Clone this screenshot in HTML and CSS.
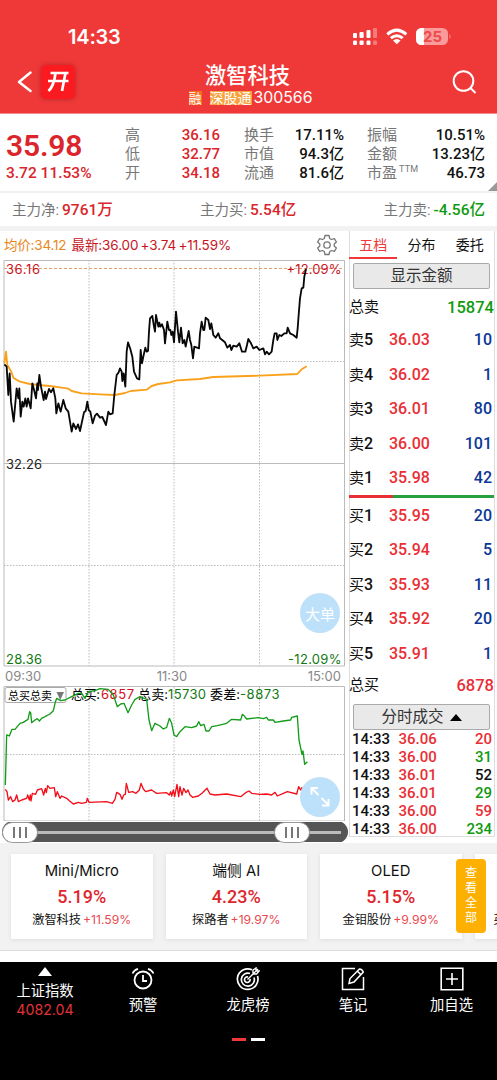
FILE: index.html
```html
<!DOCTYPE html>
<html lang="zh-CN">
<head>
<meta charset="utf-8">
<title>激智科技 300566</title>
<link rel="stylesheet" href="styles.css">
</head>
<body>
<header class="header">
  <div class="status">
    <span class="clock">14:33</span>
    <svg class="status-icons" width="100" height="20" viewBox="351 27 100 20">
      <g fill="#fff">
        <rect x="353" y="33" width="4" height="5" rx="1"/><rect x="359.500" y="32" width="4.200" height="6" rx="1"/><rect x="366.500" y="30" width="4" height="8" rx="1"/>
        <rect x="353" y="40.500" width="4" height="4.500" rx="1.200"/><rect x="359.500" y="40.500" width="4.200" height="4.500" rx="1.200"/><rect x="366.500" y="40.500" width="4" height="4.500" rx="1.200"/>
      </g>
      <g fill="#f47b7b"><rect x="373" y="28" width="4" height="10" rx="1"/><rect x="373" y="40.500" width="4" height="4.500" rx="1.200"/></g>
      <g fill="none" stroke="#fff" stroke-width="3"><path d="M387.300 34.300Q396.800 26 406.300 34.300"/><path d="M390.900 38.200Q396.800 33.200 402.700 38.200"/></g>
      <path d="M393 40.600Q396.800 37.600 400.600 40.600L396.800 44.300Z" fill="#fff"/>
      <rect x="416" y="28" width="32" height="17" rx="5.500" fill="#f99b9b"/>
      <path d="M424 28h-2.500a5.500 5.500 0 0 0-5.500 5.500v6a5.500 5.500 0 0 0 5.500 5.500h2.500z" fill="#fff"/>
      <path d="M449.500 34q2 2.500 0 5z" fill="#f99b9b"/>
      <text x="432.500" y="42" text-anchor="middle" class="battery">25</text>
    </svg>
  </div>
  <div class="nav">
    <svg class="back" width="16" height="22" viewBox="0 0 16 22"><path d="M13.500 1.500L2 11l11.500 9" fill="none" stroke="#fff" stroke-width="2.400" stroke-linecap="round" stroke-linejoin="round"/></svg>
    <div class="logo"><svg width="24" height="22" viewBox="0 0 24 22"><path d="M4.500 2H22.500M2 10H22.500M9.500 2Q8 15 2.500 20M19.500 2L16 20" fill="none" stroke="#fff" stroke-width="2.700"/></svg></div>
    <div class="title">
      <h1>激智科技</h1>
      <div class="code"><span class="tag deep">融</span><span class="tag">深股通</span><span>300566</span></div>
    </div>
    <svg class="search" width="26" height="26" viewBox="0 0 26 26" fill="none" stroke="#fff" stroke-width="2"><circle cx="11.500" cy="12" r="9.800"/><path d="M18.500 19l5 5"/></svg>
  </div>
</header>

<section class="quote">
  <div class="last"><strong>35.98</strong><span>3.72 11.53%</span></div>
  <dl class="c1"><dt>高</dt><dd>36.16</dd><dt>低</dt><dd>32.77</dd><dt>开</dt><dd>34.18</dd></dl>
  <dl class="c2"><dt>换手</dt><dd>17.11%</dd><dt>市值</dt><dd>94.3亿</dd><dt>流通</dt><dd>81.6亿</dd></dl>
  <dl class="c3"><dt>振幅</dt><dd>10.51%</dd><dt>金额</dt><dd>13.23亿</dd><dt>市盈<sup>TTM</sup></dt><dd>46.73</dd></dl>
  <i class="corner"></i>
</section>
<section class="funds">
  <div>主力净:<b>9761万</b></div><div>主力买:<b>5.54亿</b></div><div>主力卖:<b class="green">-4.56亿</b></div>
</section>

<main class="main">
  <section class="charts">
    <div class="legend">
      <span class="avg">均价:34.12</span><span class="new">最新:36.00 +3.74 +11.59%</span>
      <svg width="22" height="22" viewBox="0 0 22 22" fill="none" stroke="#777" stroke-width="1.300" stroke-linejoin="round"><path d="M9 1.500h4l.7 3 1.800 1 2.900-.9 2 3.400-2.200 2v2l2.200 2-2 3.400-2.900-.9-1.800 1-.7 3H9l-.7-3-1.800-1-2.900.9-2-3.400 2.200-2v-2l-2.200-2 2-3.400 2.900.9 1.800-1z"/><circle cx="11" cy="11" r="3.200"/></svg>
    </div>
    <div class="plot">
      <svg width="347" height="408" viewBox="0 259 347 408">
        <g fill="none" stroke="#bbb"><path d="M4 260.500H344.500V666H4zM4 463.500H344.500"/><path d="M89 260V666M174 260V666M259.500 260V666M4 361.500H344M4 565.500H344" stroke-dasharray="1.500 1.500"/></g>
        <path d="M4 268.500H344" stroke="#e2a078" stroke-dasharray="3 2"/>
        <g class="label"><text x="6" y="273.500" textLength="34" fill="#c8141e">36.16</text><text x="286.500" y="273.500" textLength="55" fill="#c8141e">+12.09%</text><text x="6" y="468.500" textLength="36" fill="#222">32.26</text><text x="6" y="663.500" textLength="36" fill="#127812">28.36</text><text x="288" y="663.500" textLength="53.500" fill="#127812">-12.09%</text></g>
        <g transform="translate(0 255) scale(.33333)" fill="none" stroke-linejoin="round">
          <path stroke="#f9a11b" stroke-width="5.500" d="M13 325L18 290 22 330 28 340 34 350 40 368 60 380 90 387 115 390 150 393 180 397 205 401 215 408 245 415 300 418 345 420 375 414 392 408 440 404 455 393 475 387 510 382 530 376 600 372 640 366 780 362 892 357 905 343 920 334"/>
          <path stroke="#080808" stroke-width="5.500" d="M13 328L20 335 25 420 29 355 33 440 41 500 50 400 55 430 58 400 62 485 67 440 71 455 76 430 80 455 84 430 92 460 97 385 103 408 108 430 112 385 114 405 118 360 123 395 131 435 135 410 138 432 147 402 153 412 160 400 166 430 169 475 175 445 182 470 190 435 197 460 205 470 215 530 220 505 228 522 234 508 240 528 252 472 257 468 262 440 266 465 271 470 278 505 285 482 291 476 300 488 307 486 318 510 325 470 330 478 338 475 343 420 350 360 356 352 360 340 365 350 367 378 371 355 376 395 380 290 384 262 391 282 397 305 402 350 411 370 418 373 422 285 426 325 430 305 436 278 440 290 444 288 447 230 450 190 457 183 462 215 465 230 468 180 475 215 478 203 481 215 486 208 492 225 495 265 502 200 507 225 511 225 514 240 518 230 522 262 528 170 534 230 538 262 543 218 548 265 553 255 557 275 566 228 570 255 574 270 579 310 583 275 597 280 600 235 605 200 610 225 613 225 617 188 625 195 630 222 634 205 640 240 647 248 655 235 660 250 675 262 682 278 690 270 694 285 700 272 710 275 718 265 726 290 736 290 741 270 745 252 753 265 760 280 770 275 778 285 790 280 795 298 800 290 807 298 815 290 820 255 824 235 830 235 832 255 838 240 844 243 853 235 860 235 863 218 870 235 880 240 890 248 893 220 896 180 900 130 905 100 910 98 913 65 918 42"/>
        </g>
      </svg>
      <button class="round big-order">大单</button>
    </div>
    <div class="times"><span>09:30</span><span>11:30</span><span>15:00</span></div>
    <div class="plot">
      <svg width="347" height="135" viewBox="0 686 347 135">
        <g fill="none" stroke="#bbb"><path d="M4 686.500H344.500V821H4z"/><path d="M89 687V821M174 687V821M259.500 687V821M4 754.500H344" stroke-dasharray="1.500 1.500"/></g>
        <rect x="5" y="687.500" width="61" height="15" rx="2" fill="#fff" stroke="#aaa"/>
        <text x="8" y="700" textLength="44" class="select">总买总卖</text><path d="M56.500 692h7.500l-3.800 8z" fill="#777"/>
        <g class="info"><text x="71" y="699" textLength="29">总买:</text><text x="101" y="699" textLength="33" fill="#d4101a">6857</text><text x="138" y="699" textLength="30">总卖:</text><text x="168" y="699" textLength="38" fill="#127812">15730</text><text x="210" y="699" textLength="30">委差:</text><text x="240" y="699" textLength="39.500" fill="#127812">-8873</text></g>
        <g transform="translate(0 640) scale(.33333)" fill="none" stroke-width="4" stroke-linejoin="round">
          <path stroke="#139c19" d="M16 435L20 285 28 288 36 268 45 268 60 250 70 247 84 238 89 215 92 218 95 248 105 240 112 236 118 243 125 235 135 230 150 222 160 212 165 190 170 175 182 182 195 180 215 170 235 160 245 160 255 175 265 155 285 152 300 146 325 148 340 165 352 200 362 192 372 190 384 218 395 195 405 178 420 170 440 178 447 240 455 272 465 250 480 258 490 267 500 262 508 235 515 250 522 285 530 290 540 275 555 260 575 263 590 258 596 245 602 257 612 253 618 273 627 273 635 260 652 257 680 250 695 238 722 240 727 223 732 227 740 237 775 233 790 236 800 232 805 240 820 240 825 247 850 243 872 240 875 232 892 228 897 300 906 343 909 333 914 373 922 365"/>
          <path stroke="#f20d18" d="M16 448L21 455 25 480 32 470 38 485 45 480 50 465 55 485 65 480 80 475 83 465 88 480 91 465 93 483 97 460 107 463 112 450 125 446 131 465 136 445 139 458 143 437 150 445 163 443 167 470 172 455 180 475 185 468 200 475 208 482 220 492 235 487 245 490 259 487 262 475 267 487 320 485 337 490 345 478 350 457 360 463 366 478 371 465 376 463 379 430 386 457 398 455 408 460 418 450 423 430 430 447 437 455 455 450 470 460 500 458 508 465 512 455 515 468 520 450 524 470 531 433 536 470 540 440 546 465 551 445 558 458 564 450 570 465 578 472 595 468 606 460 621 445 630 462 645 465 680 462 722 470 737 458 747 453 755 460 780 463 800 462 815 465 825 457 832 468 850 460 862 455 890 462 896 440 902 450 906 443 910 462 922 463"/>
        </g>
      </svg>
      <button class="round expand" aria-label="展开"><svg width="22" height="22" viewBox="0 0 22 22" fill="none" stroke="#fff" stroke-width="1.900"><path d="M2.500 8.500V2h6.500M2.500 2l7 7M12.500 12l7 7M13 19.500h6.500V13"/></svg></button>
    </div>
    <div class="slider"><i class="handle"></i><i class="track"></i><i class="handle"></i><i class="tail"></i></div>
  </section>

  <aside class="book">
    <nav class="tabs"><span class="on">五档</span><span>分布</span><span>委托</span></nav>
    <button class="bar-button">显示金额</button>
    <div class="total sell"><span>总卖</span><b class="green">15874</b></div>
    <div class="level"><span>卖<b>5</b></span><b>36.03</b><em>10</em></div>
    <div class="level"><span>卖<b>4</b></span><b>36.02</b><em>1</em></div>
    <div class="level"><span>卖<b>3</b></span><b>36.01</b><em>80</em></div>
    <div class="level"><span>卖<b>2</b></span><b>36.00</b><em>101</em></div>
    <div class="level"><span>卖<b>1</b></span><b>35.98</b><em>42</em></div>
    <div class="ratio"></div>
    <div class="level"><span>买<b>1</b></span><b>35.95</b><em>20</em></div>
    <div class="level"><span>买<b>2</b></span><b>35.94</b><em>5</em></div>
    <div class="level"><span>买<b>3</b></span><b>35.93</b><em>11</em></div>
    <div class="level"><span>买<b>4</b></span><b>35.92</b><em>20</em></div>
    <div class="level"><span>买<b>5</b></span><b>35.91</b><em>1</em></div>
    <div class="total buy"><span>总买</span><b>6878</b></div>
    <button class="bar-button">分时成交<i class="up"></i></button>
    <div class="ticks">
      <div><span>14:33</span><b>36.06</b><b>20</b></div>
      <div><span>14:33</span><b>36.00</b><b class="green">31</b></div>
      <div><span>14:33</span><b>36.01</b><b class="black">52</b></div>
      <div><span>14:33</span><b>36.01</b><b class="green">29</b></div>
      <div><span>14:33</span><b>36.00</b><b>59</b></div>
      <div><span>14:33</span><b>36.00</b><b class="green">234</b></div>
    </div>
  </aside>
</main>

<section class="cards">
  <article><h2>Mini/Micro</h2><strong>5.19%</strong><p>激智科技<span>+11.59%</span></p></article>
  <article><h2>端侧 AI</h2><strong>4.23%</strong><p>探路者<span>+19.97%</span></p></article>
  <article><h2>OLED</h2><strong>5.15%</strong><p>金钼股份<span>+9.99%</span></p></article>
  <article class="cut"><p>英</p></article>
  <button class="all">查看全部</button>
</section>

<footer class="footer">
  <div class="index"><i></i><span>上证指数</span><b>4082.04</b></div>
  <div class="item alarm"><svg width="24" height="24" viewBox="0 0 24 24" fill="none" stroke="#fff" stroke-width="1.800"><circle cx="12" cy="13" r="8.500"/><path d="M12 8v6h4M1.500 6.500Q3 3 7 1.800M22.500 6.500Q21 3 17 1.800"/></svg><span>预警</span></div>
  <div class="item list"><svg width="24" height="24" viewBox="0 0 24 24" fill="none" stroke="#fff" stroke-width="1.700"><path d="M16 2.800A10.300 10.300 0 1 0 21.500 9M14 6.500A6.500 6.500 0 1 0 18 10.500M12 10A2.800 2.800 0 1 0 14 12"/><path d="M11.500 12.500L22 2M17 7V3l3-2v3h3l-2.500 3z" stroke-width="1.400"/></svg><span>龙虎榜</span></div>
  <div class="item note"><svg width="24" height="24" viewBox="0 0 24 24" fill="none" stroke="#fff" stroke-width="1.500"><path d="M14 1.500H1.500v21h21V10"/><path d="M8 16.500l1-5L18.500 2q2.500 0 3.800 3L13 15zM16.500 4.200l3.500 3.500"/></svg><span>笔记</span></div>
  <div class="item add"><svg width="24" height="24" viewBox="0 0 24 24" fill="none" stroke="#fff" stroke-width="1.600"><path d="M1.200 1.200h21.600v21.600H1.200zM12 6v12M6 12h12"/></svg><span>加自选</span></div>
  <div class="pager"><i></i><i></i></div>
</footer>
</body>
</html>
```
FILE: styles.css
```css
* { box-sizing: border-box; }
body {
  margin: 0; width: 497px; height: 1080px; overflow: hidden; background: #fff;
  display: flex; flex-direction: column;
  font-family: Roboto, "Noto Sans CJK SC", sans-serif; color: #111;
}
h1, h2, p, dl, dd { margin: 0; }
b { font-weight: 500; }
i, em { font-style: normal; }
svg { display: block; }
button { border: 0; padding: 0; font: inherit; color: inherit; }

.header { height: 114px; background: #ef3939; border-bottom: 1px solid #f58b8b; color: #fff; flex: none; }
.status { height: 54px; padding: 27px 46px 0 68px; display: flex; justify-content: space-between; }
.clock { font: 600 20px/20px Inter, sans-serif; letter-spacing: -.2px; }
.battery { font: 700 15px Inter, sans-serif; fill: #ed4a4a; }
.nav { display: grid; grid-template-columns: 22px 36px 1fr 26px; padding: 10px 19px 0 17px; height: 58px; }
.back { margin-top: 7px; }
.logo { width: 34px; height: 34px; border-radius: 5px; background: #fb1a20; box-shadow: 0 0 5px #b42525; display: flex; align-items: center; justify-content: center; margin: 1px 0 0 2px; }
.title { text-align: center; padding-right: 39px; }
.title h1 { font-size: 21.200px; line-height: 24px; font-weight: 500; padding-left: 7px; }
.code { display: flex; justify-content: center; align-items: center; margin-top: 2px; padding-left: 13px; font: 15.800px/15px Inter, "Noto Sans CJK SC", sans-serif; }
.code .tag { background: #f7a23d; font-size: 14px; line-height: 14px; height: 14px; margin-right: 2px; }
.code .tag.deep { background: #fb6e22; margin-right: 8px; font-size: 13px; }
.search { margin-top: 5px; }

.quote { position: relative; height: 77px; flex: none; display: grid; grid-template-columns: 119px 95px 100px 118px; column-gap: 0; padding: 11px 0 0 6px; }
.last { color: #d9252b; }
.last strong { display: block; font-size: 30px; line-height: 41px; font-weight: 600; letter-spacing: -.2px; }
.last span { display: block; font-size: 15.500px; font-weight: 500; line-height: 15px; white-space: nowrap; }
.quote dl { display: grid; grid-template-columns: auto auto; grid-auto-rows: 19px; justify-content: space-between; line-height: 20px; }
.quote .c2 { width: 100px; margin-left: 24px; }
.quote .c3 { width: 118px; margin-left: 47px; }
dt { font-size: 15px; color: #777; white-space: nowrap; }
dt sup { font-size: 9px; line-height: 0; vertical-align: 6px; margin-left: 2px; letter-spacing: .2px; }
dd { font-size: 15px; font-weight: 500; text-align: right; }
.c1 dd { color: #d9252b; }
.corner { position: absolute; right: 0; bottom: 0; border-left: 9px solid transparent; border-bottom: 9px solid #999; }
.funds { height: 40px; flex: none; border-top: 2px solid #f2f2f2; border-bottom: 5px solid #f2f2f2; padding: 0 12px; display: flex; justify-content: space-between; font-size: 14.500px; line-height: 34px; color: #777; }
.funds b { color: #d9252b; margin-left: 3px; font-size: 15.500px; }
.funds .green, .green { color: #109a10 !important; }

.main { display: grid; grid-template-columns: 347px 150px; height: 612px; flex: none; }
.legend { display: flex; align-items: center; height: 28px; padding: 0 9px 0 4px; font: 13.500px/28px Inter, "Noto Sans CJK SC", sans-serif; letter-spacing: -.1px; word-spacing: -1.500px; white-space: nowrap; }
.legend .avg { color: #e8871c; width: 67.500px; letter-spacing: -.2px; }
.legend .new { color: #c8141e; flex: 1; }
.plot { position: relative; }
.label { font: 13px Inter, sans-serif; }
.info, .select { font: 13px Inter, "Noto Sans CJK SC", sans-serif; }
.select { font-size: 11px; }
.times { height: 19px; display: flex; justify-content: space-between; padding: 0 6px 0 5px; font: 13px/19px Inter, sans-serif; color: #888; }
.times span:nth-child(2) { margin-right: 5px; }
.round { position: absolute; left: 300px; width: 40px; height: 40px; border-radius: 50%; background: #bee1fb; color: #fff; font-size: 15px; display: flex; align-items: center; justify-content: center; }
.big-order { top: 334px; }
.expand { top: 91px; }
.slider { display: flex; align-items: center; height: 22px; width: 346px; margin-left: 2px; padding-top: 1px; border-radius: 12px; background: linear-gradient(#555, #555) 0 1px / 100% 20px no-repeat; }
.handle { width: 36px; height: 21px; border-radius: 11px; border: 1px solid #999; background: linear-gradient(90deg, #777 2px, transparent 2px 6px, #777 6px 8px, transparent 8px 12px, #777 12px 14px, transparent 14px) 10px 4px / 14px 11px no-repeat, #fff; }
.track { flex: 1; height: 3px; background: #bbb; }
.tail { width: 31px; height: 3px; margin-right: 7px; background: #bbb; }

.book { margin-left: 2px; width: 146px; height: 606px; border: 1px solid #ddd; border-top: 0; display: flex; flex-direction: column; }
.tabs { display: flex; height: 28px; flex: none; font-size: 14px; line-height: 28px; margin-left: -1px; }
.tabs span { width: 49px; text-align: center; }
.tabs .on { color: #ef3939; border-bottom: 2px solid #ef3939; }
.bar-button { width: 137px; height: 26px; flex: none; margin: 4px 0 0 3px; border: 1px solid #aaa; border-radius: 2px; background: #e9e9e9; color: #333; font-size: 15.500px; line-height: 22px; }
.up { display: inline-block; border: 6px solid transparent; border-top: 0; border-bottom: 7px solid #000; margin-left: 6px; vertical-align: 1px; }
.total { display: flex; justify-content: space-between; font-size: 15px; flex: none; margin-left: -1px; }
.total b { color: #e92e35; font-size: 16.500px; }
.sell { height: 34px; line-height: 37px; }
.buy { height: 29px; line-height: 29px; }
.level { display: grid; grid-template-columns: 40px 1fr auto; height: 34.500px; flex: none; line-height: 34.500px; padding-right: 3px; margin-left: -1px; font-size: 15px; }
.level > b { color: #e92e35; font-size: 16px; }
.level span b { font-size: 16px; }
.level em { color: #0a3796; font-weight: 500; font-size: 16px; margin-right: -1px; }
.ratio { height: 3px; flex: none; margin: -1px 0 1px -1px; background: linear-gradient(90deg, #e92e35 44px, #25a03c 44px); }
.ticks { font-size: 15px; font-weight: 500; }
.ticks div { display: grid; grid-template-columns: 46.500px 1fr auto; line-height: 18px; padding: 0 2px; }
.ticks b { color: #e92e35; }
.ticks .black { color: #111; }

.cards { position: relative; height: 108px; flex: none; background: #f2f2f2; border-bottom: 1px solid #ddd; padding: 11px 0 0 11px; display: flex; gap: 13px; overflow: hidden; }
.cards article { width: 141.500px; height: 85px; flex: none; background: #fff; box-shadow: 0 1px 4px #ddd; text-align: center; padding-top: 6px; }
.cards h2 { font: 14.800px/22px Inter, "Noto Sans CJK SC", sans-serif; }
.cards strong { display: block; font-size: 18px; line-height: 30px; font-weight: 500; color: #e0262d; }
.cards p { font: 12.200px/15px Inter, "Noto Sans CJK SC", sans-serif; }
.cards p span { color: #e84a50; margin-left: 2px; }
.cards .cut { text-align: left; padding: 58px 0 0 19px; }
.all { position: absolute; left: 456px; top: 16px; width: 30px; height: 74px; border-radius: 4px; background: #fdb000; color: #fff; font-size: 12px; line-height: 15px; padding: 0 9px; }

.footer { margin-top: 11px; height: 118px; background: #000; color: #fff; display: grid; grid-template-columns: 90px 106px 104px 106px 91px; grid-template-rows: 76px 10px; font-size: 14.300px; }
.index { display: flex; flex-direction: column; align-items: center; padding-top: 5px; }
.index i { border: 7px solid transparent; border-top: 0; border-bottom: 9px solid #fff; }
.index span { line-height: 20px; margin-top: 5px; }
.index b { color: #e2333a; font: 14.200px/18px Inter, sans-serif; }
.item { display: flex; flex-direction: column; align-items: center; padding-top: 5px; gap: 4px; line-height: 20px; }
.pager { grid-column: 1 / -1; display: flex; gap: 5px; justify-content: center; }
.pager i { width: 14px; height: 3px; background: #ef3939; }
.pager i + i { background: #fff; }
```
